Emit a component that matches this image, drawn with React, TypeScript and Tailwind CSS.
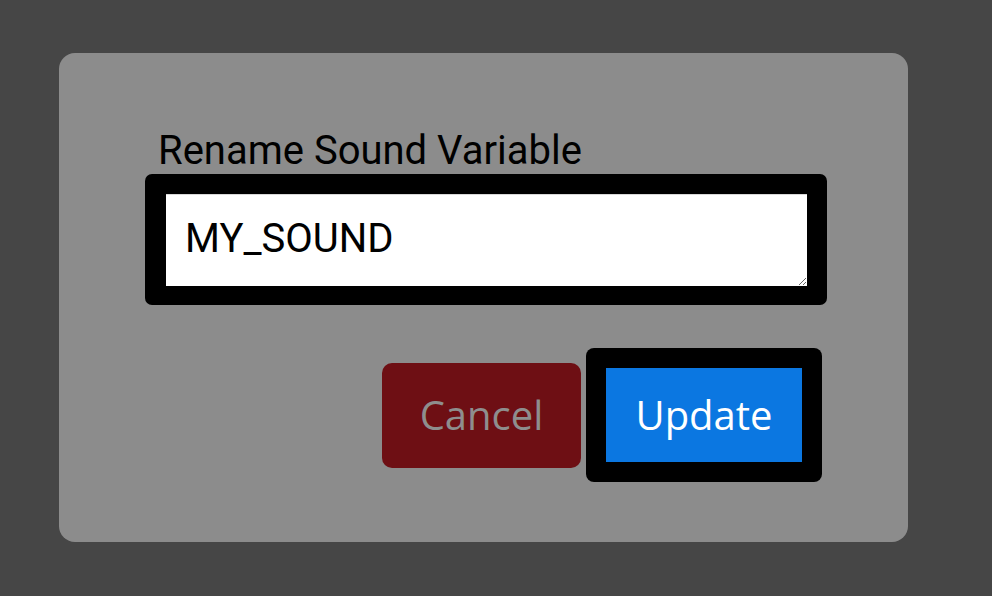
export default function App() {
    return (
        <div className="w-[992px] h-[596px] bg-[#464646] pt-[53px] pl-[59px] overflow-hidden">
            <div className="w-[849px] h-[489px] bg-[#8c8c8c] rounded-[16px] pt-[75px] pl-[86px]">
                <label
                    htmlFor="sound-name"
                    className="block pl-[13px] text-[40px] leading-[46px] text-black"
                    style={{ fontFamily: 'Roboto, sans-serif' }}
                >
                    Rename Sound Variable
                </label>
                <div className="w-[682px] h-[131px] bg-black rounded-[7px] p-[20px] pl-[21px]">
                    <textarea
                        id="sound-name"
                        rows={1}
                        defaultValue="MY_SOUND"
                        className="block w-[641px] h-[92px] bg-white text-black text-[40px] leading-[44px] pt-[22px] pl-[19px] border-0 border-t border-t-[#d8d8d8] outline-none"
                        style={{ fontFamily: 'Roboto, sans-serif' }}
                    />
                </div>
                <div className="w-[682px] mt-[43px] pr-[5px] flex items-center justify-end gap-[5px]">
                    <button
                        className="w-[199px] h-[105px] bg-[#6e0f14] rounded-[10px] text-[40px] text-[#8e8e8e] flex items-center justify-center"
                        style={{ fontFamily: '"Open Sans", sans-serif' }}
                    >
                        Cancel
                    </button>
                    <div className="w-[236px] h-[134px] bg-black rounded-[8px] p-[20px]">
                        <button
                            className="w-[196px] h-[94px] bg-[#0b77e1] text-[40px] text-white flex items-center justify-center"
                            style={{ fontFamily: '"Open Sans", sans-serif' }}
                        >
                            Update
                        </button>
                    </div>
                </div>
            </div>
        </div>
    );
}
